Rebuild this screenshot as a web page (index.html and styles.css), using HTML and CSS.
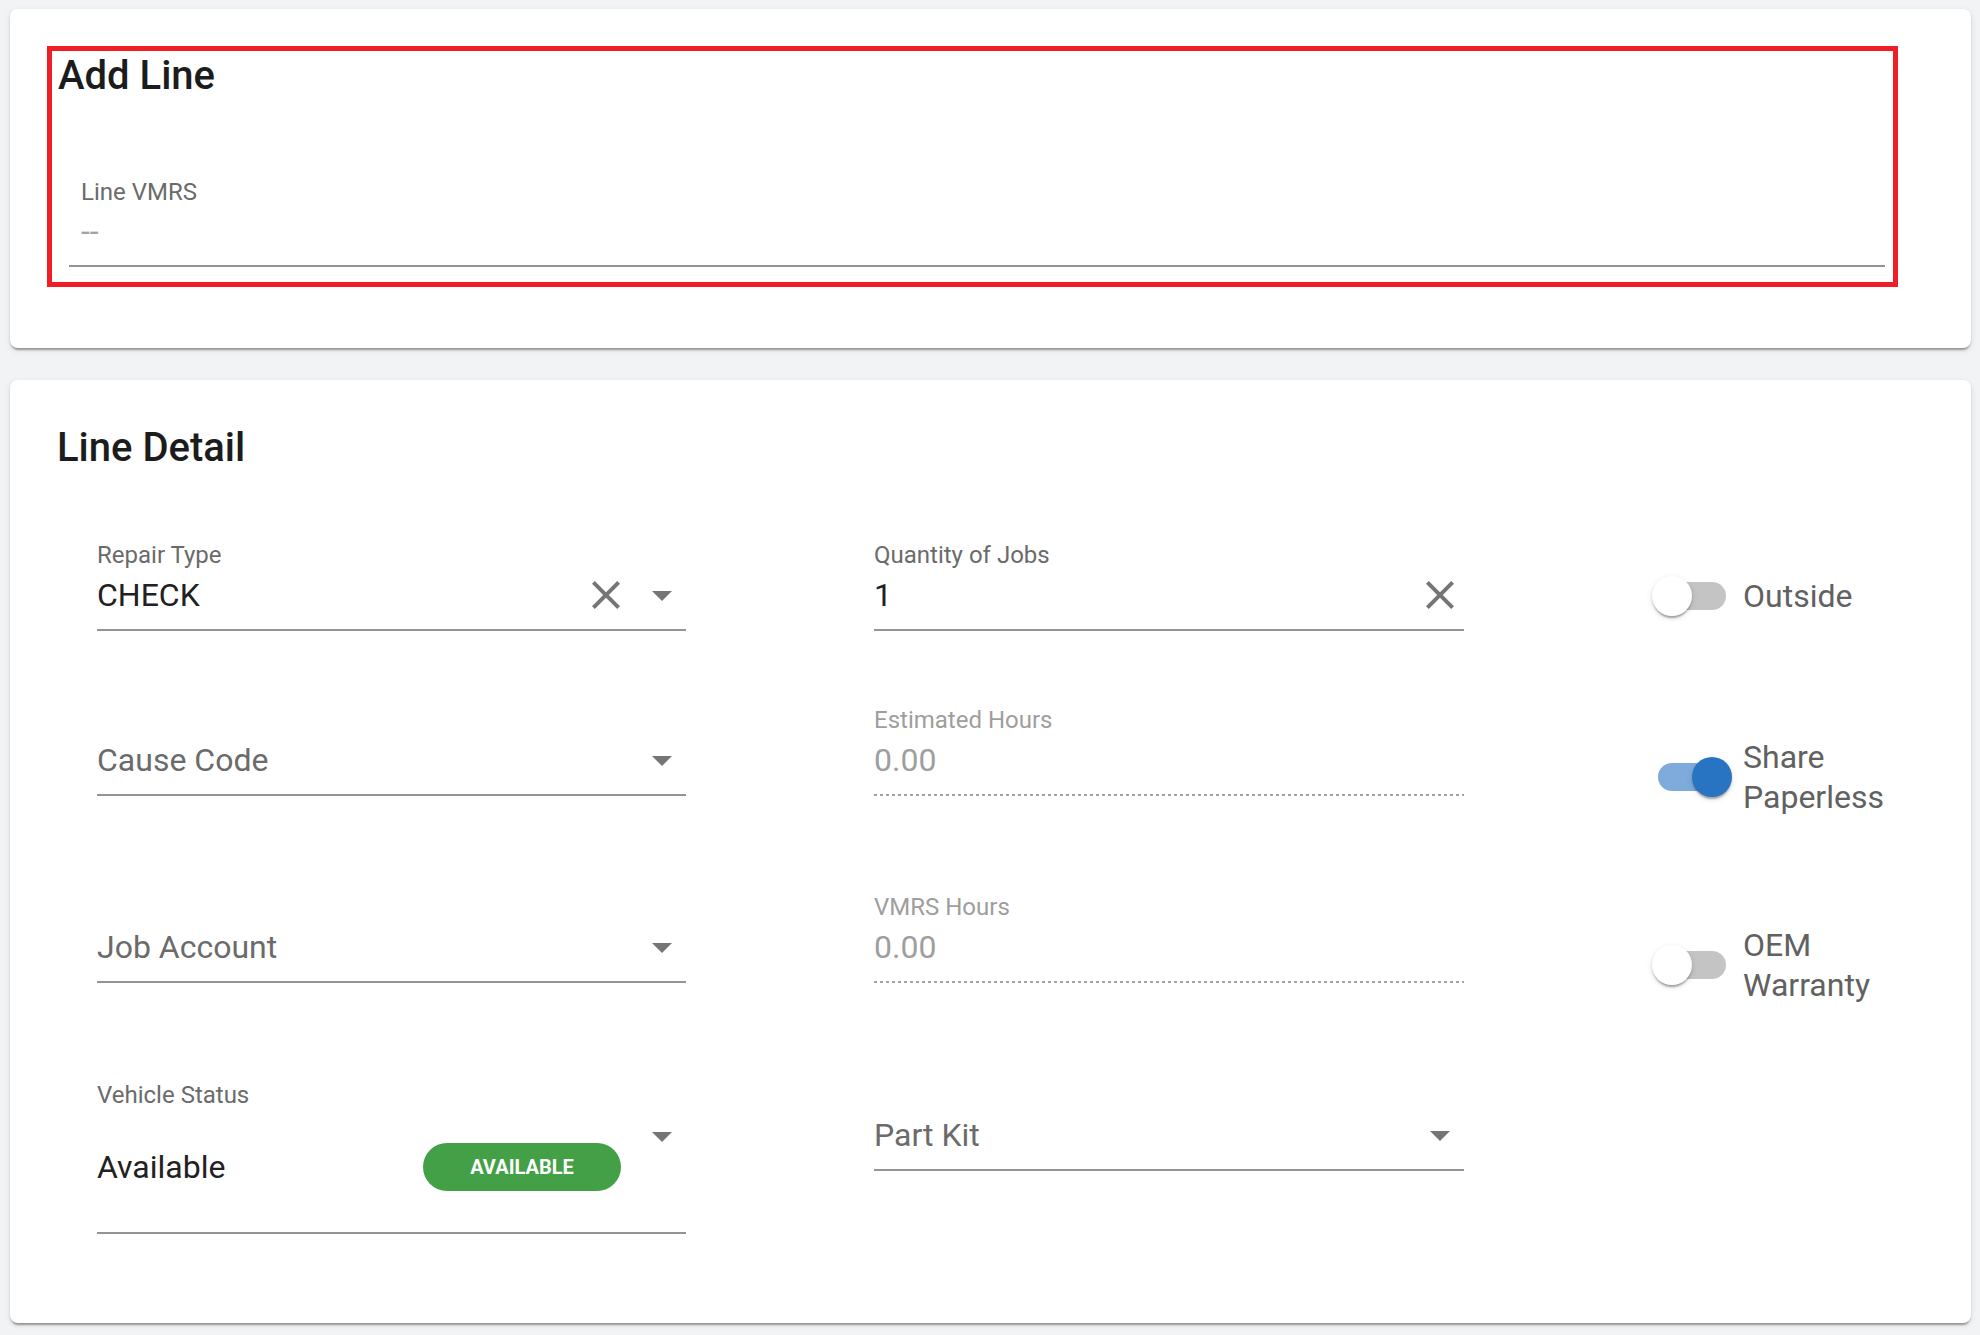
FILE: index.html
```html
<!DOCTYPE html>
<html lang="en">
<head>
<meta charset="utf-8">
<title>Add Line</title>
<link rel="stylesheet" href="styles.css">
</head>
<body>
<div class="page">
  <section class="card card--add">
    <div class="highlight">
      <h2 class="card-title card-title--add">Add Line</h2>
      <div class="field field--vmrs">
        <div class="field-label">Line VMRS</div>
        <div class="field-value field-value--empty">--</div>
      </div>
    </div>
  </section>

  <section class="card card--detail">
    <h2 class="card-title card-title--detail">Line Detail</h2>
    <div class="detail-grid">
      <!-- row 1 -->
      <div class="field">
        <div class="field-label">Repair Type</div>
        <div class="field-value">
          <span class="value-text">CHECK</span>
          <svg class="icon icon--close" viewBox="0 0 24 24"><path d="M19 6.41L17.59 5 12 10.59 6.41 5 5 6.41 10.59 12 5 17.59 6.41 19 12 13.41 17.59 19 19 17.59 13.41 12z"/></svg>
          <svg class="icon icon--arrow" viewBox="0 0 24 24"><path d="M7 10l5 5 5-5z"/></svg>
        </div>
      </div>
      <div class="field">
        <div class="field-label">Quantity of Jobs</div>
        <div class="field-value">
          <span class="value-text">1</span>
          <svg class="icon icon--close icon--end" viewBox="0 0 24 24"><path d="M19 6.41L17.59 5 12 10.59 6.41 5 5 6.41 10.59 12 5 17.59 6.41 19 12 13.41 17.59 19 19 17.59 13.41 12z"/></svg>
        </div>
      </div>
      <div class="toggle toggle--row1">
        <span class="switch"><span class="track"></span><span class="thumb"></span></span>
        <span class="toggle-label">Outside</span>
      </div>

      <!-- row 2 -->
      <div class="field">
        <div class="field-label"></div>
        <div class="field-value">
          <span class="value-text placeholder">Cause Code</span>
          <svg class="icon icon--arrow" viewBox="0 0 24 24"><path d="M7 10l5 5 5-5z"/></svg>
        </div>
      </div>
      <div class="field field--disabled">
        <div class="field-label">Estimated Hours</div>
        <div class="field-value"><span class="value-text">0.00</span></div>
      </div>
      <div class="toggle toggle--row2">
        <span class="switch switch--on"><span class="track"></span><span class="thumb"></span></span>
        <span class="toggle-label">Share Paperless</span>
      </div>

      <!-- row 3 -->
      <div class="field">
        <div class="field-label"></div>
        <div class="field-value">
          <span class="value-text placeholder">Job Account</span>
          <svg class="icon icon--arrow" viewBox="0 0 24 24"><path d="M7 10l5 5 5-5z"/></svg>
        </div>
      </div>
      <div class="field field--disabled">
        <div class="field-label">VMRS Hours</div>
        <div class="field-value"><span class="value-text">0.00</span></div>
      </div>
      <div class="toggle toggle--row3">
        <span class="switch"><span class="track"></span><span class="thumb"></span></span>
        <span class="toggle-label">OEM Warranty</span>
      </div>

      <!-- row 4 -->
      <div class="field field--status">
        <div class="field-label">Vehicle Status</div>
        <div class="field-value field-value--status">
          <span class="value-text">Available</span>
          <span class="chip">AVAILABLE</span>
          <svg class="icon icon--arrow icon--top" viewBox="0 0 24 24"><path d="M7 10l5 5 5-5z"/></svg>
        </div>
      </div>
      <div class="field">
        <div class="field-label"></div>
        <div class="field-value">
          <span class="value-text placeholder">Part Kit</span>
          <svg class="icon icon--arrow" viewBox="0 0 24 24"><path d="M7 10l5 5 5-5z"/></svg>
        </div>
      </div>
    </div>
  </section>
</div>
</body>
</html>
```

FILE: styles.css
```css
* { box-sizing: border-box; }

html, body {
  margin: 0;
  padding: 0;
  background: #f2f3f5;
  font-family: Roboto, "Liberation Sans", Arial, sans-serif;
  color: #212121;
}

.page {
  padding: 9px 9px 12px 10px;
}

.card {
  background: #ffffff;
  border-radius: 8px;
  box-shadow: 0 4px 2px -2px rgba(0,0,0,0.22), 0 2px 2px 0 rgba(0,0,0,0.14), 0 2px 6px 0 rgba(0,0,0,0.10);
}

.card--add {
  padding: 37px 73px 61px 37px;
  margin-bottom: 32px;
}

.card--detail {
  padding: 44px 0 89px 0;
}

.highlight {
  border: 5px solid #ee1d26;
  padding: 1px 8px 15px 0;
}

.card-title {
  margin: 0;
  font-size: 40px;
  line-height: 48px;
  font-weight: 500;
  color: #1c1c1c;
}

.card-title--add {
  padding-left: 6px;
}

.card-title--detail {
  padding-left: 47px;
}

/* ---------- fields ---------- */
.field {
  display: flex;
  flex-direction: column;
  border-bottom: 2px solid #949494;
  padding-bottom: 14px;
}

.field-label {
  height: 28px;
  font-size: 24px;
  line-height: 28px;
  color: #6b6b6b;
  white-space: nowrap;
}

.field-value {
  margin-top: 6px;
  height: 40px;
  display: flex;
  align-items: center;
  font-size: 32px;
  line-height: 40px;
  color: #212121;
}

.value-text {
  flex: 1 1 auto;
  white-space: nowrap;
}

.placeholder {
  color: #6b6b6b;
}

.field--vmrs {
  margin: 78px 0 0 17px;
}

.field--vmrs .field-label,
.field--vmrs .field-value {
  padding-left: 12px;
}

.field--vmrs .field-value {
  margin-top: 5px;
}

.field-value--empty {
  color: #a3a3a3;
}

.field--disabled {
  border-bottom: none;
  padding-bottom: 16px;
  background-image: linear-gradient(to right, #a3a3a3 50%, rgba(255,255,255,0) 0%);
  background-position: left bottom;
  background-size: 6px 2px;
  background-repeat: repeat-x;
}

.field--disabled .field-label,
.field--disabled .field-value {
  color: #9e9e9e;
}

.icon {
  flex: none;
  width: 48px;
  height: 48px;
  margin: -4px 0;
  fill: #757575;
}

.icon--close + .icon--arrow {
  margin-left: 8px;
}

.field--status {
  padding-bottom: 0;
}

.field-value--status {
  height: auto;
  padding: 28px 0 41px 0;
}

.chip {
  flex: none;
  width: 198px;
  height: 48px;
  border-radius: 24px;
  background: #43a047;
  color: #ffffff;
  font-size: 20px;
  font-weight: 700;
  line-height: 48px;
  text-align: center;
  margin-right: 17px;
}

.icon--top {
  align-self: flex-start;
  margin-top: -31px;
  margin-bottom: 0;
}

/* ---------- grid ---------- */
.detail-grid {
  margin: 69px 0 0 87px;
  display: grid;
  grid-template-columns: 589px 590px 1fr;
  grid-template-rows: 165px 187px 188px auto;
  column-gap: 188px;
  align-items: start;
}

/* ---------- toggles ---------- */
.toggle {
  display: flex;
  align-items: center;
}

.toggle--row1 { margin-top: 35px; }
.toggle--row2 { margin-top: 31px; }
.toggle--row3 { margin-top: 32px; }

.switch {
  position: relative;
  flex: none;
  width: 91px;
  height: 40px;
}

.track {
  position: absolute;
  left: 6px;
  top: 6px;
  width: 68px;
  height: 28px;
  border-radius: 14px;
  background: #c4c4c4;
}

.thumb {
  position: absolute;
  left: 0;
  top: 0;
  width: 40px;
  height: 40px;
  border-radius: 50%;
  background: #ffffff;
  box-shadow: 0 4px 2px -2px rgba(0,0,0,0.2), 0 2px 2px 0 rgba(0,0,0,0.14), 0 2px 6px 0 rgba(0,0,0,0.12);
}

.switch--on .track {
  background: #7eabdb;
}

.switch--on .thumb {
  left: 40px;
  background: #2874c2;
}

.toggle-label {
  max-width: 180px;
  font-size: 32px;
  line-height: 40px;
  color: #616161;
}
```
